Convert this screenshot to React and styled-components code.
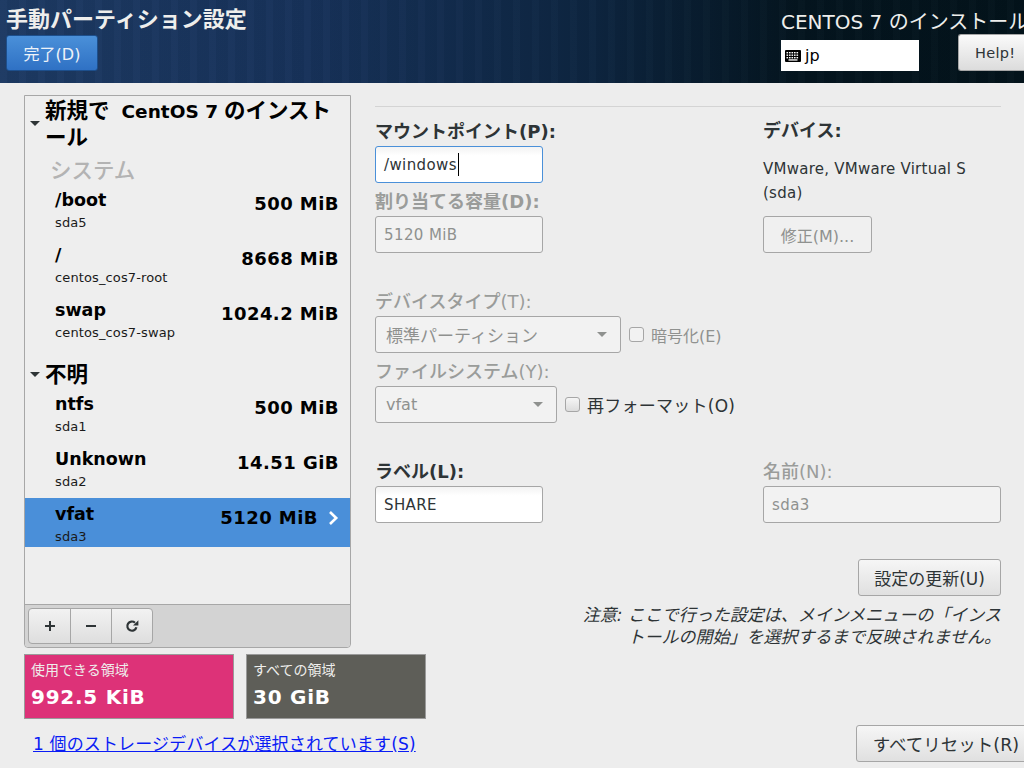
import React from "react";
import styled, { createGlobalStyle } from "styled-components";

const FONT = `"DejaVu Sans", "Noto Sans CJK JP", sans-serif`;

const Global = createGlobalStyle`
  html, body { margin: 0; padding: 0; background: #ededed; }
  body { width: 1024px; height: 768px; overflow: hidden; font-family: ${FONT}; color: #2e3436; }
  * { box-sizing: border-box; }
`;

const Page = styled.div`
  width: 1024px; height: 768px; overflow: hidden; display: flex; flex-direction: column; background: #ededed;
`;
const Header = styled.header`
  height: 83px; flex: none; display: flex; justify-content: space-between;
  background:
    repeating-linear-gradient(90deg, rgba(255,255,255,.012) 0 7px, rgba(0,0,0,.03) 7px 19px),
    linear-gradient(90deg, #1d3a63 0%, #17325a 30%, #0d2540 58%, #04151f 78%, #03131b 100%);
`;
const HeaderLeft = styled.div`
  padding: 6px 0 0 6px; display: flex; flex-direction: column; align-items: flex-start;
`;
const PageTitle = styled.h1`
  margin: 0; font-size: 22px; line-height: 28px; font-weight: 700; color: #eeeeec; white-space: nowrap;
`;
const DoneButton = styled.div`
  margin-top: 1px; width: 92px; height: 36px; border-radius: 3px; border: 1px solid #1d4f8c;
  background: linear-gradient(#4a90d9, #2f71c4); color: #eef3f9; font-size: 16px;
  display: flex; align-items: center; justify-content: center;
`;
const HeaderRight = styled.div`
  width: 243px; flex: none; padding-top: 8px; overflow: hidden; display: flex; flex-direction: column;
`;
const InstallTitle = styled.div`
  font-size: 20px; line-height: 28px; color: #eeeeec; white-space: nowrap;
`;
const HeaderControls = styled.div`
  display: flex; align-items: flex-end; margin-top: -2px;
`;
const KeyboardBox = styled.div`
  width: 138px; height: 31px; flex: none; background: #fff; color: #000; font-size: 16px; display: flex;
  align-items: center; gap: 4px; padding: 0 0 0 4px;
`;
const HelpButton = styled.div`
  margin-left: 39px; width: 66px; height: 37px; flex: none; border: 1px solid #a6a6a6; border-radius: 3px 0 0 3px; border-right: 0;
  background: linear-gradient(#fafafa, #dcdcdc); color: #2e3436; font-size: 14.5px;
  display: flex; align-items: center; padding-left: 16px; letter-spacing: .3px;
`;

const Body = styled.main`
  flex: 1; display: flex; padding: 12px 0 0 24px; min-height: 0;
`;
const LeftColumn = styled.section`
  width: 327px; flex: none; display: flex; flex-direction: column;
`;
const ListFrame = styled.div`
  width: 327px; height: 553px; flex: none; border: 1px solid #a7a7a7; border-radius: 0 0 4px 4px; display: flex; flex-direction: column; background: #eeeeee;
`;
const ListScroll = styled.div`
  flex: 1; min-height: 0;
`;
const GroupHead = styled.div`
  display: flex; align-items: center; padding: 0 0 ${p => p.$pb || 0}px 5px; height: ${p => p.$h}px; margin-top: ${p => p.$mt || 0}px;
`;
const Arrow = styled.span`
  width: 0; height: 0; border-left: 5px solid transparent; border-right: 5px solid transparent; border-top: 5px solid #2e3436; flex: none; margin-right: 5px;
`;
const GroupTitle = styled.div`
  font-size: 21.5px; font-weight: 700; line-height: 27px; color: #000; width: 295px;
`;
const LatinPart = styled.span`
  font-size: 18.5px; line-height: 0; margin: 0 6px 0 12px;
`;
const SubHead = styled.div`
  font-size: 21.5px; line-height: 27px; height: 27px; font-weight: 500; color: #b3b3b3; padding-left: 25px; margin-top: 3px;
`;
const Row = styled.div`
  height: 49px; margin-top: ${p => p.$mt ?? 6}px; padding: 5px 11px 0 30px; display: flex; justify-content: space-between; align-items: flex-start;
  background: ${p => (p.$sel ? "#4a8fd9" : "transparent")}; color: #000;
`;
const RowText = styled.div`
  display: flex; flex-direction: column;
`;
const RowName = styled.div`
  font-size: 17.5px; font-weight: 700; line-height: 22px; white-space: nowrap;
`;
const RowDev = styled.div`
  font-size: 13px; line-height: 16px; margin-top: 4px; color: #1a1a1a; white-space: nowrap; letter-spacing: .12px;
`;
const RowSize = styled.div`
  font-size: 18px; font-weight: 700; line-height: 22px; margin-top: 4px; display: flex; align-items: center; gap: 10px; white-space: nowrap; letter-spacing: .45px;
`;
const Toolbar = styled.div`
  height: 43px; flex: none; background: #d3d3d3; border-top: 1px solid #a7a7a7; padding: 3px 0 0 3px; border-radius: 0 0 4px 4px;
`;
const ToolGroup = styled.div`
  display: inline-flex; height: 36px; border: 1px solid #a6a6a6; border-radius: 4px; background: linear-gradient(#f2f2f2, #dedede);
`;
const ToolButton = styled.div`
  width: 41px; display: flex; align-items: center; justify-content: center; color: #2e3436;
  & + & { border-left: 1px solid #a6a6a6; }
`;
const Stats = styled.div`
  display: flex; gap: 12px; margin-top: 6px; width: max-content;
`;
const Stat = styled.div`
  width: ${p => p.$w}px; height: 65px; border: 1px solid #9a9a9a; background: ${p => p.$bg}; color: #fff; padding: 6px 0 0 6px;
`;
const StatLabel = styled.div`
  font-size: 14px; line-height: 18px; color: #eeeeec; white-space: nowrap;
`;
const StatValue = styled.div`
  font-size: 20px; line-height: 28px; font-weight: 700; margin-top: 4px; white-space: nowrap; letter-spacing: .75px;
`;
const StorageLink = styled.a`
  display: inline-block; align-self: flex-start; margin: 14px 0 0 9px; font-size: 17px; line-height: 22px; color: #0a1cf5; text-decoration: underline; white-space: nowrap; letter-spacing: .15px;
`;

const RightColumn = styled.section`
  width: 626px; flex: none; display: flex; flex-direction: column; margin-left: 24px;
`;
const Rule = styled.div`
  height: 1px; background: #d4d4d4; margin-top: 11px;
`;
const Columns = styled.div`
  display: grid; grid-template-columns: 388px 238px;
`;
const Label = styled.div`
  font-size: 18px; line-height: 22px; height: 22px; white-space: nowrap; font-weight: ${p => (p.$strong ? 700 : 500)};
  color: ${p => (p.$off ? "#9a9c9a" : "#2e3436")}; margin-top: ${p => p.$mt || 0}px;
`;
const Input = styled.div`
  width: ${p => p.$w || 168}px; height: 37px; border-radius: 3px; border: 1px solid ${p => (p.$focus ? "#4a90d9" : "#a6a6a6")};
  background: ${p => (p.$off ? "#f2f2f2" : "linear-gradient(#f3f3f3, #fff 25%)")}; color: ${p => (p.$off ? "#8f918f" : "#2e3436")}; font-size: 15px; letter-spacing: .4px;
  display: flex; align-items: center; padding-left: 8px; margin-top: 3px; white-space: nowrap;
`;
const Caret = styled.span`
  width: 1px; height: 23px; background: #000; margin-left: 1px;
`;
const SelectRow = styled.div`
  display: flex; align-items: center; gap: 8px; margin-top: 3px;
`;
const Select = styled.div`
  width: ${p => p.$w}px; height: 37px; flex: none; border: 1px solid #a6a6a6; border-radius: 3px; background: #f2f2f2; color: #8f918f; font-size: 17px;
  display: flex; align-items: center; justify-content: space-between; padding: 0 13px 0 10px; white-space: nowrap;
`;
const SelectValue = styled.span`
  font-size: ${p => p.$size || 17}px;
`;
const SelectArrow = styled.span`
  width: 0; height: 0; border-left: 5px solid transparent; border-right: 5px solid transparent; border-top: 5px solid #8f918f;
`;
const Check = styled.label`
  display: flex; align-items: center; gap: 7px; font-size: ${p => p.$size || 16}px; white-space: nowrap; color: ${p => (p.$off ? "#8f918f" : "#2e3436")};
  letter-spacing: ${p => (p.$size ? ".25px" : "0")};
`;
const Box = styled.span`
  width: 15px; height: 15px; border: 1px solid #a6a6a6; border-radius: 3px; background: ${p => (p.$g ? "linear-gradient(#f5f5f5,#dcdcdc)" : "#f2f2f2")};
`;
const DeviceText = styled.div`
  font-size: 15px; letter-spacing: .25px; line-height: 24px; width: 225px; margin-top: 15px; color: #2e3436;
`;
const PlainButton = styled.div`
  width: ${p => p.$w}px; height: 37px; flex: none; border: 1px solid #a6a6a6; border-radius: 3px; background: ${p => (p.$off ? "#f0f0f0" : "linear-gradient(#f6f6f6,#e0e0e0)")};
  color: ${p => (p.$off ? "#8f918f" : "#2e3436")}; font-size: ${p => p.$size || 16}px; display: flex; align-items: center; justify-content: center; white-space: nowrap;
  margin-top: ${p => p.$mt || 0}px;
`;
const UpdateRow = styled.div`
  display: flex; justify-content: flex-end; margin-top: 36px;
`;
const Note = styled.div`
  font-size: 17px; line-height: 22px; font-style: italic; color: #2e3436; text-align: right; margin-top: 8px; white-space: nowrap;
`;
const ResetRow = styled.div`
  display: flex; justify-content: flex-end; margin: 77px -35px 0 0;
`;

const Keyboard = () => (
  <svg width="16" height="12" viewBox="0 0 16 12">
    <rect width="16" height="12" rx="1" fill="#000" />
    {[2, 4.5, 7].map((y) =>
      [1.5, 4, 6.5, 9, 11.5].map((x) => <rect key={x + "-" + y} x={x} y={y} width="1.6" height="1.4" fill="#fff" />)
    )}
    <rect x="3.5" y="9.3" width="9" height="1.3" fill="#fff" />
  </svg>
);
const Refresh = () => (
  <svg width="14" height="14" viewBox="0 0 14 14" fill="none">
    <path d="M11.4 8.2A4.6 4.6 0 1 1 10 3.7" stroke="#2e3436" strokeWidth="2.2" />
    <path d="M8 6.6h5.4V1.2z" fill="#2e3436" />
  </svg>
);
const Chevron = () => (
  <svg width="11" height="14" viewBox="0 0 11 14" fill="none">
    <path d="M2 1l6.2 6L2 13" stroke="#fff" strokeWidth="2.6" />
  </svg>
);

const PartRow = ({ name, dev, size, sel, mt }) => (
  <Row $sel={sel} $mt={mt}>
    <RowText>
      <RowName>{name}</RowName>
      <RowDev>{dev}</RowDev>
    </RowText>
    <RowSize>
      {size}
      {sel && <Chevron />}
    </RowSize>
  </Row>
);

export default function App() {
  return (
    <Page>
      <Global />
      <Header>
        <HeaderLeft>
          <PageTitle>手動パーティション設定</PageTitle>
          <DoneButton>完了(D)</DoneButton>
        </HeaderLeft>
        <HeaderRight>
          <InstallTitle>CENTOS 7 のインストール</InstallTitle>
          <HeaderControls>
            <KeyboardBox><Keyboard />jp</KeyboardBox>
            <HelpButton>Help!</HelpButton>
          </HeaderControls>
        </HeaderRight>
      </Header>
      <Body>
        <LeftColumn>
          <ListFrame>
            <ListScroll>
              <GroupHead $h={58} $pb={3}>
                <Arrow />
                <GroupTitle>新規で<LatinPart>CentOS 7</LatinPart>のインストール</GroupTitle>
              </GroupHead>
              <SubHead>システム</SubHead>
              <PartRow name="/boot" dev="sda5" size="500 MiB" mt={0} />
              <PartRow name="/" dev="centos_cos7-root" size="8668 MiB" />
              <PartRow name="swap" dev="centos_cos7-swap" size="1024.2 MiB" />
              <GroupHead $h={27} $mt={18}>
                <Arrow />
                <GroupTitle>不明</GroupTitle>
              </GroupHead>
              <PartRow name="ntfs" dev="sda1" size="500 MiB" mt={0} />
              <PartRow name="Unknown" dev="sda2" size="14.51 GiB" />
              <PartRow name="vfat" dev="sda3" size="5120 MiB" sel />
            </ListScroll>
            <Toolbar>
              <ToolGroup>
                <ToolButton><svg width="12" height="12" viewBox="0 0 12 12"><path d="M5 1h2v4h4v2H7v4H5V7H1V5h4z" fill="#2e3436" /></svg></ToolButton>
                <ToolButton><svg width="12" height="12" viewBox="0 0 12 12"><path d="M1 5h10v2H1z" fill="#2e3436" /></svg></ToolButton>
                <ToolButton><Refresh /></ToolButton>
              </ToolGroup>
            </Toolbar>
          </ListFrame>
          <Stats>
            <Stat $w={210} $bg="#dd3278">
              <StatLabel>使用できる領域</StatLabel>
              <StatValue>992.5 KiB</StatValue>
            </Stat>
            <Stat $w={180} $bg="#5e5e58">
              <StatLabel>すべての領域</StatLabel>
              <StatValue>30 GiB</StatValue>
            </Stat>
          </Stats>
          <StorageLink>1 個のストレージデバイスが選択されています(S)</StorageLink>
        </LeftColumn>
        <RightColumn>
          <Rule />
          <Columns>
            <div>
              <Label $strong $mt={14}>マウントポイント(P):</Label>
              <Input $focus>/windows<Caret /></Input>
              <Label $off $strong $mt={8}>割り当てる容量(D):</Label>
              <Input $off>5120 MiB</Input>
              <Label $off $mt={38}>デバイスタイプ(T):</Label>
              <SelectRow>
                <Select $w={246}><SelectValue>標準パーティション</SelectValue><SelectArrow /></Select>
                <Check $off><Box />暗号化(E)</Check>
              </SelectRow>
              <Label $off $mt={8}>ファイルシステム(Y):</Label>
              <SelectRow>
                <Select $w={182}><SelectValue $size={16}>vfat</SelectValue><SelectArrow /></Select>
                <Check $size={17}><Box $g />再フォーマット(O)</Check>
              </SelectRow>
              <Label $strong $mt={38}>ラベル(L):</Label>
              <Input>SHARE</Input>
            </div>
            <div>
              <Label $strong $mt={13}>デバイス:</Label>
              <DeviceText>VMware, VMware Virtual S (sda)</DeviceText>
              <PlainButton $off $w={109} $mt={11}>修正(M)...</PlainButton>
              <Label $off $mt={208}>名前(N):</Label>
              <Input $off $w={238}>sda3</Input>
            </div>
          </Columns>
          <UpdateRow><PlainButton $w={143} $size={17}>設定の更新(U)</PlainButton></UpdateRow>
          <Note>注意: ここで行った設定は、メインメニューの「インス<br />トールの開始」を選択するまで反映されません。</Note>
          <ResetRow><PlainButton $w={180} $size={17.5}>すべてリセット(R)</PlainButton></ResetRow>
        </RightColumn>
      </Body>
    </Page>
  );
}
